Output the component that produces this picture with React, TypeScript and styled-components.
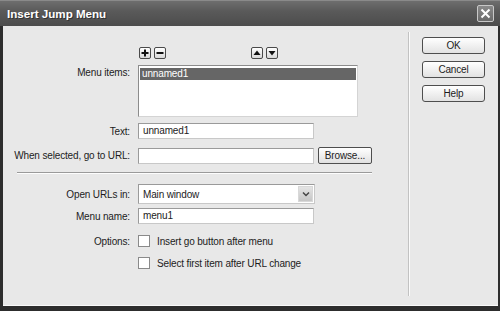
import React from "react";
import styled, { createGlobalStyle } from "styled-components";

const Global = createGlobalStyle`
  html, body { margin: 0; padding: 0; background: #2b2b2b; }
  body { font-family: "Liberation Sans", Arial, sans-serif; font-size: 10px; letter-spacing: -0.15px; color: #1c1c1c; }
  * { box-sizing: border-box; }
`;

const Window = styled.div`
  width: 500px;
  height: 311px;
  display: flex;
  flex-direction: column;
  background: #2d2d2d;
`;

const TitleBar = styled.div`
  height: 26px;
  display: flex;
  align-items: center;
  justify-content: space-between;
  padding: 0 6px 0 7px;
  background: linear-gradient(#6e6e6e 0%, #5a5a5a 40%, #4c4c4c 100%);
  border-top: 1px solid #8a8a8a;
`;

const Title = styled.span`
  color: #fff;
  font-weight: bold;
  font-size: 11.6px;
  letter-spacing: 0;
  text-shadow: 1px 1px 0 #333;
`;

const CloseButton = styled.div`
  width: 17px;
  height: 17px;
  border: 1px solid #c8c8c8;
  border-radius: 2px;
  background: linear-gradient(#8a8a8a, #6a6a6a);
  display: flex;
  align-items: center;
  justify-content: center;
`;

const Body = styled.div`
  flex: 1;
  display: flex;
  margin: 0 2px 5px 3px;
  background: #e8e8e8;
  border-bottom: 1px solid #fafafa;
`;

const Main = styled.div`
  width: 405px;
  padding-top: 21px;
  display: flex;
  flex-direction: column;
`;

const Row = styled.div<{ $mt?: number; $top?: boolean }>`
  display: flex;
  align-items: ${(p) => (p.$top ? "flex-start" : "center")};
  margin-top: ${(p) => p.$mt ?? 0}px;
`;

const Label = styled.div<{ $pt?: number }>`
  width: 127px;
  margin-right: 8px;
  text-align: right;
  white-space: nowrap;
  padding-top: ${(p) => p.$pt ?? 0}px;
`;

const IconGroup = styled.div<{ $ml?: number }>`
  display: flex;
  gap: 3px;
  margin-left: ${(p) => p.$ml ?? 0}px;
`;

const IconButton = styled.div`
  width: 12px;
  height: 12px;
  border: 1px solid #4a4a4a;
  border-radius: 2px;
  background: linear-gradient(#ffffff, #d8d8d8);
  display: flex;
  align-items: center;
  justify-content: center;
`;

const ListBox = styled.div`
  width: 220px;
  height: 52px;
  background: #fff;
  border: 1px solid;
  border-color: #8c8c8c #d4d4d4 #d4d4d4 #8c8c8c;
  padding: 2px 1px;
`;

const ListItem = styled.div<{ $selected?: boolean }>`
  height: 12px;
  line-height: 12px;
  padding-left: 2px;
  background: ${(p) => (p.$selected ? "#666" : "transparent")};
  color: ${(p) => (p.$selected ? "#fff" : "#1c1c1c")};
`;

const TextBox = styled.div`
  width: 176px;
  height: 16px;
  line-height: 14px;
  background: #fff;
  border: 1px solid;
  border-color: #9a9a9a #c8c8c8 #c8c8c8 #9a9a9a;
  padding-left: 4px;
`;

const SmallButton = styled.div`
  margin-left: 4px;
  width: 54px;
  height: 17px;
  border: 1px solid #4e4e4e;
  border-radius: 2px;
  background: linear-gradient(#ffffff, #e0e0e0);
  display: flex;
  align-items: center;
  justify-content: center;
`;

const Separator = styled.div`
  margin: 8px 0 0 14px;
  width: 355px;
  height: 2px;
  border-top: 1px solid #9a9a9a;
  border-bottom: 1px solid #fdfdfd;
`;

const Select = styled.div`
  width: 177px;
  height: 20px;
  background: #fff;
  border: 1px solid;
  border-color: #9a9a9a #c8c8c8 #c8c8c8 #9a9a9a;
  display: flex;
  align-items: center;
  justify-content: space-between;
  padding: 0 1px 0 4px;
`;

const SelectArrow = styled.div`
  width: 15px;
  height: 16px;
  background: linear-gradient(#e4e4e4, #c6c6c6);
  border: 1px solid #d8d8d8;
  display: flex;
  align-items: center;
  justify-content: center;
`;

const CheckRow = styled.div<{ $mt?: number }>`
  display: flex;
  align-items: center;
  height: 14px;
  margin-top: ${(p) => p.$mt ?? 0}px;
`;

const CheckBox = styled.div`
  width: 12px;
  height: 12px;
  background: #fff;
  border: 1px solid #8a8a8a;
  margin-right: 7px;
`;

const Indent = styled.div`
  width: 135px;
`;

const VDivider = styled.div`
  width: 2px;
  margin: 6px 0 9px;
  border-left: 1px solid #c2c2c2;
  border-right: 1px solid #fbfbfb;
`;

const Actions = styled.div`
  padding: 11px 0 0 12px;
  display: flex;
  flex-direction: column;
  gap: 7px;
`;

const DlgButton = styled.div`
  width: 63px;
  height: 17px;
  border: 1px solid #4e4e4e;
  border-radius: 3px;
  background: linear-gradient(#ffffff, #e2e2e2);
  display: flex;
  align-items: center;
  justify-content: center;
`;

const Glyph = ({ d }: { d: string }) => (
  <svg width="8" height="8" viewBox="0 0 8 8">
    <path d={d} fill="#111" />
  </svg>
);

export default function App() {
  return (
    <>
      <Global />
      <Window>
        <TitleBar>
          <Title>Insert Jump Menu</Title>
          <CloseButton>
            <svg width="11" height="11" viewBox="0 0 11 11">
              <path d="M1.5 1.5 L9.5 9.5 M9.5 1.5 L1.5 9.5" stroke="#fff" strokeWidth="2" />
            </svg>
          </CloseButton>
        </TitleBar>
        <Body>
          <Main>
            <Row>
              <Indent />
              <IconGroup $ml={1}>
                <IconButton>
                  <Glyph d="M3 0.5h2v2.5h2.5v2h-2.5v2.5h-2v-2.5h-2.5v-2h2.5z" />
                </IconButton>
                <IconButton>
                  <Glyph d="M0.5 3h7v2h-7z" />
                </IconButton>
              </IconGroup>
              <IconGroup $ml={85}>
                <IconButton>
                  <Glyph d="M4 1.5 L7.5 6 H0.5 Z" />
                </IconButton>
                <IconButton>
                  <Glyph d="M0.5 2 H7.5 L4 6.5 Z" />
                </IconButton>
              </IconGroup>
            </Row>
            <Row $mt={6} $top>
              <Label $pt={2}>Menu items:</Label>
              <ListBox>
                <ListItem $selected>unnamed1</ListItem>
              </ListBox>
            </Row>
            <Row $mt={6}>
              <Label>Text:</Label>
              <TextBox>unnamed1</TextBox>
            </Row>
            <Row $mt={8}>
              <Label>When selected, go to URL:</Label>
              <TextBox />
              <SmallButton>Browse...</SmallButton>
            </Row>
            <Separator />
            <Row $mt={10}>
              <Label>Open URLs in:</Label>
              <Select>
                <span>Main window</span>
                <SelectArrow>
                  <svg width="8" height="6" viewBox="0 0 8 6">
                    <path d="M1 1.5 L4 4.5 L7 1.5" stroke="#444" strokeWidth="1.5" fill="none" />
                  </svg>
                </SelectArrow>
              </Select>
            </Row>
            <Row $mt={4}>
              <Label>Menu name:</Label>
              <TextBox>menu1</TextBox>
            </Row>
            <CheckRow $mt={10}>
              <Label>Options:</Label>
              <CheckBox />
              <span>Insert go button after menu</span>
            </CheckRow>
            <CheckRow $mt={8}>
              <Indent />
              <CheckBox />
              <span>Select first item after URL change</span>
            </CheckRow>
          </Main>
          <VDivider />
          <Actions>
            <DlgButton>OK</DlgButton>
            <DlgButton>Cancel</DlgButton>
            <DlgButton>Help</DlgButton>
          </Actions>
        </Body>
      </Window>
    </>
  );
}
